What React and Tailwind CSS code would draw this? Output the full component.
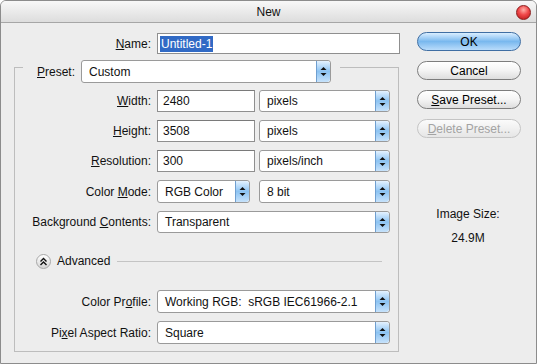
import React from "react";

function Arrow() {
  return (
    <div className="w-[14px] self-stretch rounded-r-[3px] border-l border-[#6f9fd0] bg-gradient-to-b from-[#e4f2ff] via-[#8cc3f2] to-[#c6e2fb] flex items-center justify-center">
      <svg width="7" height="11" viewBox="0 0 7 11">
        <polygon points="3.5,1 6.5,4 0.5,4" fill="#111" />
        <polygon points="0.5,7 6.5,7 3.5,10" fill="#111" />
      </svg>
    </div>
  );
}

function Select({ value, w, h = "h-[22px]" }) {
  return (
    <div className={`${w} ${h} flex items-stretch bg-white border border-[#9a9a9a] rounded-[3px] overflow-hidden`}>
      <div className="flex-1 flex items-center pl-[7px] whitespace-pre">{value}</div>
      <Arrow />
    </div>
  );
}

function Input({ value, w }) {
  return (
    <div className={`${w} h-[22px] flex items-center bg-white border border-[#8f8f8f] border-t-[#7a7a7a] pl-[5px]`}>
      {value}
    </div>
  );
}

function Label({ children }) {
  return <div className="w-[136px] text-right whitespace-nowrap">{children}</div>;
}

function Btn({ children, kind }) {
  const base = "w-[104px] h-[19px] rounded-full flex items-center justify-center border";
  if (kind === "default")
    return (
      <div className={`${base} border-[#3f6ea3] bg-gradient-to-b from-[#d9eeff] via-[#79b8ee] to-[#b9dcfb] text-black`}>
        {children}
      </div>
    );
  if (kind === "disabled")
    return (
      <div className={`${base} border-[#c4c4c4] bg-gradient-to-b from-[#fbfbfb] to-[#e6e6e6] text-[#a3a3a3]`}>
        {children}
      </div>
    );
  return (
    <div className={`${base} border-[#7d7d7d] bg-gradient-to-b from-white via-[#f4f4f4] to-[#dedede] text-black`}>
      {children}
    </div>
  );
}

export default function App() {
  return (
    <div className="w-[537px] h-[364px] bg-[#ededed] border border-[#8c8c8c] rounded-t-[6px] flex flex-col overflow-hidden text-[12px] text-[#111] font-['Liberation_Sans',Arial,sans-serif] leading-none">
      {/* title bar */}
      <div className="h-[22px] shrink-0 relative flex items-center justify-center bg-gradient-to-b from-[#f8f8f8] to-[#dddddd] border-b border-[#a6a6a6]">
        <span>New</span>
        <div className="absolute right-[5px] top-[4px] w-[15px] h-[15px] rounded-full border border-[#8b1b1b] bg-[radial-gradient(circle_at_50%_30%,#ffb0a8_0%,#f0484a_45%,#b41515_100%)]" />
      </div>

      <div className="flex flex-1">
        {/* left column */}
        <div className="w-[399px] shrink-0 flex flex-col">
          <div className="mt-[10px] flex items-center h-[21px]">
            <div className="w-[150px] text-right">
              <u>N</u>ame:
            </div>
            <div className="ml-[6px] w-[243px] h-[21px] flex items-center bg-white border border-[#8f8f8f] pl-[2px]">
              <span className="bg-[#316ac5] text-white px-[1px] py-[2px]">Untitled-1</span>
            </div>
          </div>

          {/* frame */}
          <div className="ml-[13px] mt-[13px] w-[385px] h-[285px] border border-[#bdbdbd] flex flex-col">
            <div className="-mt-[8px] ml-[8px] flex items-center self-start bg-[#ededed] pl-[14px] pr-[9px]">
              <div className="whitespace-nowrap">
                <u>P</u>reset:
              </div>
              <div className="ml-[6px]">
                <Select value="Custom" w="w-[250px]" h="h-[23px]" />
              </div>
            </div>

            <div className="mt-[7px] flex flex-col gap-[8px]">
              <div className="flex items-center">
                <Label>
                  <u>W</u>idth:
                </Label>
                <div className="ml-[6px] flex gap-[4px]">
                  <Input value="2480" w="w-[98px]" />
                  <Select value="pixels" w="w-[131px]" />
                </div>
              </div>
              <div className="flex items-center">
                <Label>
                  <u>H</u>eight:
                </Label>
                <div className="ml-[6px] flex gap-[4px]">
                  <Input value="3508" w="w-[98px]" />
                  <Select value="pixels" w="w-[131px]" />
                </div>
              </div>
              <div className="flex items-center">
                <Label>
                  <u>R</u>esolution:
                </Label>
                <div className="ml-[6px] flex gap-[4px]">
                  <Input value="300" w="w-[98px]" />
                  <Select value="pixels/inch" w="w-[131px]" />
                </div>
              </div>
              <div className="flex items-center">
                <Label>
                  Color <u>M</u>ode:
                </Label>
                <div className="ml-[6px] flex gap-[9px]">
                  <Select value="RGB Color" w="w-[93px]" h="h-[23px]" />
                  <Select value="8 bit" w="w-[131px]" h="h-[23px]" />
                </div>
              </div>
              <div className="flex items-center">
                <Label>
                  Background <u>C</u>ontents:
                </Label>
                <div className="ml-[6px]">
                  <Select value="Transparent" w="w-[233px]" />
                </div>
              </div>
            </div>

            {/* advanced */}
            <div className="mt-[20px] flex items-center h-[16px] pl-[21px]">
              <div className="w-[15px] h-[15px] rounded-full border border-[#a8a8a8] bg-gradient-to-b from-white to-[#d6d6d6] flex items-center justify-center">
                <svg width="9" height="9" viewBox="0 0 9 9">
                  <polyline points="1.5,4.5 4.5,1.5 7.5,4.5" fill="none" stroke="#111" strokeWidth="1.4" />
                  <polyline points="1.5,8 4.5,5 7.5,8" fill="none" stroke="#111" strokeWidth="1.4" />
                </svg>
              </div>
              <span className="ml-[6px]">Advanced</span>
              <div className="ml-[7px] w-[265px] h-px bg-[#c4c4c4]" />
            </div>

            <div className="mt-[21px] flex flex-col gap-[8px]">
              <div className="flex items-center">
                <Label>
                  Color Pr<u>o</u>file:
                </Label>
                <div className="ml-[6px]">
                  <Select value="Working RGB:  sRGB IEC61966-2.1" w="w-[233px]" h="h-[23px]" />
                </div>
              </div>
              <div className="flex items-center">
                <Label>
                  Pi<u>x</u>el Aspect Ratio:
                </Label>
                <div className="ml-[6px]">
                  <Select value="Square" w="w-[233px]" h="h-[23px]" />
                </div>
              </div>
            </div>
          </div>
        </div>

        {/* right column */}
        <div className="flex-1 flex flex-col">
          <div className="ml-[17px] mt-[9px] flex flex-col gap-[10px]">
            <Btn kind="default">OK</Btn>
            <Btn>Cancel</Btn>
            <Btn>
              <span>
                <u>S</u>ave Preset...
              </span>
            </Btn>
            <Btn kind="disabled">
              <span>
                <u>D</u>elete Preset...
              </span>
            </Btn>
          </div>
          <div className="mt-[70px] text-center">Image Size:</div>
          <div className="mt-[12px] text-center">24.9M</div>
        </div>
      </div>
    </div>
  );
}
